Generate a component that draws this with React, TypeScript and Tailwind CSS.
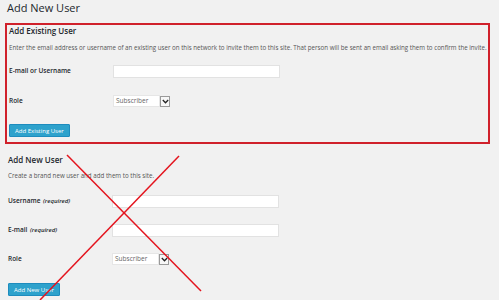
import React from 'react';

const SelectBox: React.FC = () => (
  <div className="flex items-center h-[12px]">
    <div className="w-[47px] h-full bg-white border border-[#e6e6e6] flex items-center pl-[2px] text-[6.5px] text-[#666]">
      Subscriber
    </div>
    <div className="w-[10px] h-[11px] bg-[#f7f7f7] border border-[#9a9a9a] flex items-center justify-center">
      <svg width="7" height="5" viewBox="0 0 7 5">
        <path d="M0.8 1 L3.5 3.8 L6.2 1" fill="none" stroke="#222" strokeWidth="1.3" />
      </svg>
    </div>
  </div>
);

const Field: React.FC<{ label: string; req?: boolean; children: React.ReactNode; className?: string }> = ({
  label,
  req,
  children,
  className,
}) => (
  <div className={`flex items-center ${className ?? ''}`}>
    <div className="w-[104px] text-[6.5px] font-semibold text-[#23282d] leading-none">
      {label}
      {req && <span className="ml-[1px] text-[6px] italic font-semibold"> (required)</span>}
    </div>
    {children}
  </div>
);

const TextInput: React.FC = () => (
  <div className="w-[167px] h-[13px] bg-white border border-[#e2e2e2]" />
);

const Button: React.FC<{ label: string; className?: string }> = ({ label, className }) => (
  <button
    className={`h-[13px] px-[5px] rounded-[1px] bg-[#2ea2cc] border border-[#1e8cbe] text-white text-[6px] leading-none ${className ?? ''}`}
  >
    {label}
  </button>
);

export default function App() {
  return (
    <div className="relative w-[499px] h-[300px] overflow-hidden bg-[#f1f1f1] text-[#555] font-['Open_Sans',sans-serif]">
      <h1 className="h-[23px] pl-[7px] pt-[1px] text-[11px] leading-[14px] text-[#23282d]">Add New User</h1>

      <section className="ml-[5px] w-[485px] h-[121px] border-2 border-[#d0212b] pl-[2px] flex flex-col items-start">
        <h2 className="mt-[2px] text-[8px] leading-[8px] font-semibold text-[#23282d]">Add Existing User</h2>
        <p className="mt-[9px] text-[6.2px] leading-[7px] whitespace-nowrap">
          Enter the email address or username of an existing user on this network to invite them to this site. That
          person will be sent an email asking them to confirm the invite.
        </p>
        <Field label="E-mail or Username" className="mt-[14px] h-[13px]">
          <TextInput />
        </Field>
        <Field label="Role" className="mt-[17px] h-[12px]">
          <SelectBox />
        </Field>
        <Button label="Add Existing User" className="mt-[17px]" />
      </section>

      <section className="pl-[8px] flex flex-col items-start">
        <h2 className="mt-[12px] text-[8px] leading-[8px] font-semibold text-[#23282d]">Add New User</h2>
        <p className="mt-[8px] text-[6.2px] leading-[7px]">Create a brand new user and add them to this site.</p>
        <Field label="Username" req className="mt-[16px] h-[12px]">
          <TextInput />
        </Field>
        <Field label="E-mail" req className="mt-[17px] h-[12px]">
          <TextInput />
        </Field>
        <Field label="Role" className="mt-[17px] h-[12px]">
          <SelectBox />
        </Field>
        <Button label="Add New User" className="mt-[18px]" />
      </section>

      <svg className="absolute inset-0 pointer-events-none" width="499" height="300" viewBox="0 0 499 300">
        <line x1="67" y1="155" x2="201" y2="291" stroke="#e4141e" strokeWidth="1.5" />
        <line x1="179" y1="156" x2="40" y2="300" stroke="#e4141e" strokeWidth="1.5" />
      </svg>
    </div>
  );
}
